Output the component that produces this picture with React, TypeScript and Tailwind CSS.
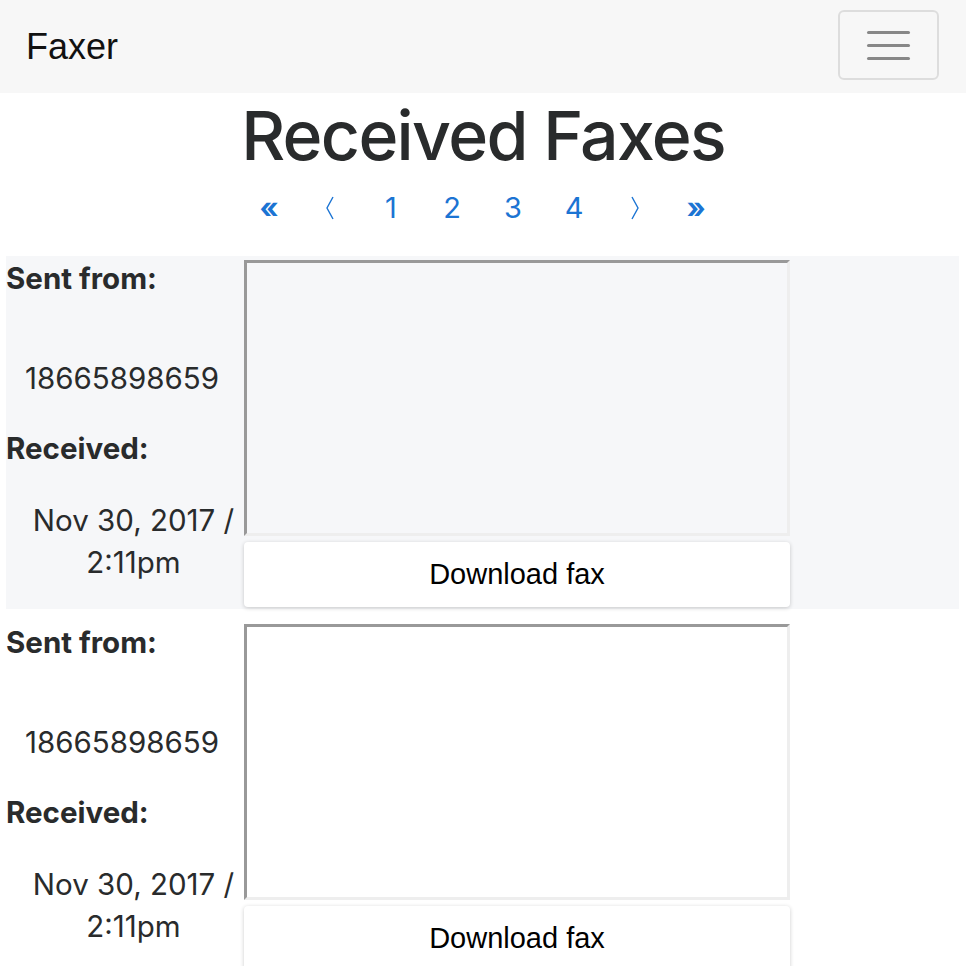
import React from "react";

const pages = ["1", "2", "3", "4"];

function Angle({ dir }: { dir: "left" | "right" }) {
  return (
    <svg width="10" height="24" viewBox="0 0 10 24" className="inline-block">
      <polyline
        points={dir === "left" ? "8,1 2,12 8,23" : "2,1 8,12 2,23"}
        fill="none"
        stroke="#1b74d3"
        strokeWidth="1.4"
      />
    </svg>
  );
}

function FaxRow({ shaded }: { shaded: boolean }) {
  return (
    <div
      className={`ml-[6px] mr-[7px] mb-[11px] flex pt-[4px] pb-[2px] ${
        shaded ? "bg-[#f6f7f9]" : "bg-white"
      }`}
    >
      <div className="w-[238px] shrink-0 text-[#292b2c]">
        <div className="h-9 text-[29.5px] font-bold leading-9">Sent from:</div>
        <div className="mt-[61px] pr-[6px] text-center text-[29.5px] leading-[42px]">
          18665898659
        </div>
        <div className="mt-[31px] h-9 text-[29.5px] font-bold leading-9">
          Received:
        </div>
        <div className="mt-[33px] pl-[17px] text-center text-[29.5px] leading-[42px]">
          Nov 30, 2017 /<br />
          2:11pm
        </div>
      </div>
      <div className="flex w-[546px] shrink-0 flex-col gap-[6px]">
        <div className="h-[276px] border-[3px] border-t-[#999] border-l-[#999] border-r-[#eee] border-b-[#eee]" />
        <button
          type="button"
          className="h-[65px] rounded-[4px] bg-white text-[29px] text-black shadow-[0_1px_4px_rgba(0,0,0,0.2)] [font-family:'Liberation_Sans',Arial,sans-serif]"
        >
          Download fax
        </button>
      </div>
    </div>
  );
}

export default function App() {
  return (
    <div className="min-h-screen bg-white [font-family:Inter,'Noto_Sans',sans-serif]">
      <nav className="flex h-[93px] items-center justify-between bg-[#f7f7f7] pl-[26px] pr-[27px]">
        <span className="text-[36px] text-[#111] [font-family:'Liberation_Sans',Arial,sans-serif]">
          Faxer
        </span>
        <button
          type="button"
          className="mb-[3px] flex h-[70px] w-[101px] flex-col items-center justify-center gap-[10px] rounded-[6px] border-2 border-[#ddd]"
        >
          <span className="block h-[3px] w-[43px] rounded-full bg-[#888]" />
          <span className="block h-[3px] w-[43px] rounded-full bg-[#888]" />
          <span className="block h-[3px] w-[43px] rounded-full bg-[#888]" />
        </button>
      </nav>
      <h1 className="text-center text-[68px] font-medium leading-[84px] tracking-[-0.025em] text-[#292b2c]">
        Received Faxes
      </h1>
      <div className="flex h-[62px] items-center justify-center pr-[1px] text-[29px] text-[#1b74d3]">
        <span className="w-[61px] text-center font-bold">«</span>
        <span className="flex w-[61px] justify-center">
          <Angle dir="left" />
        </span>
        {pages.map((p) => (
          <span key={p} className="w-[61px] text-center">
            {p}
          </span>
        ))}
        <span className="flex w-[61px] justify-center">
          <Angle dir="right" />
        </span>
        <span className="w-[61px] text-center font-bold">»</span>
      </div>
      <div className="mt-[17px]">
        <FaxRow shaded />
        <FaxRow shaded={false} />
      </div>
    </div>
  );
}
